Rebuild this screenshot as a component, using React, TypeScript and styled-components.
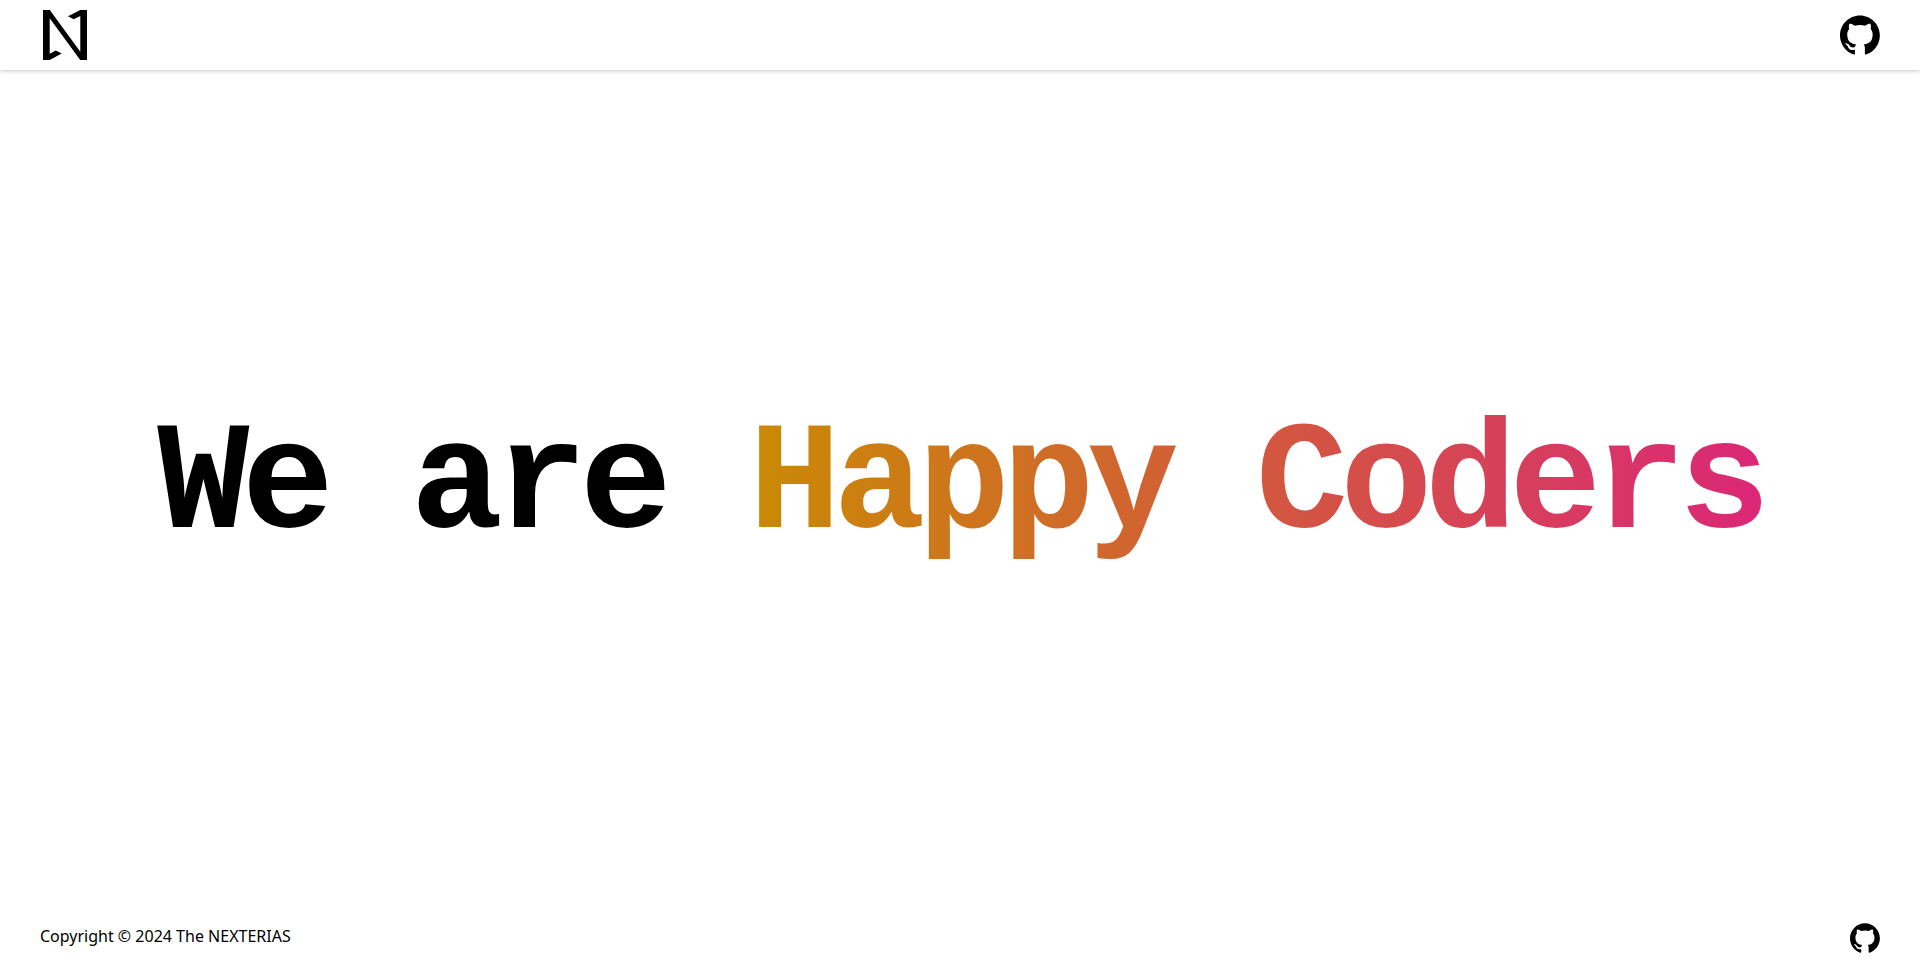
import React from "react";
import styled, { createGlobalStyle } from "styled-components";

const GlobalStyle = createGlobalStyle`
  * { box-sizing: border-box; }
  body { margin: 0; color: #000; background: #fff; font: 16px/24px "Noto Sans", sans-serif; }
`;

const Page = styled.div`
  display: flex;
  flex-direction: column;
  min-height: 100vh;
`;

const Header = styled.header`
  display: flex;
  align-items: center;
  justify-content: space-between;
  height: 70px;
  padding: 0 40px;
  box-shadow: 0 0 5px rgba(0, 0, 0, 0.3);
`;

const IconLink = styled.a<{ $size: number }>`
  display: block;
  color: inherit;
  line-height: 0;
  svg { width: ${(p) => p.$size}px; height: ${(p) => p.$size}px; }
`;

const Main = styled.main`
  display: flex;
  flex: 1;
  align-items: center;
  justify-content: center;
`;

const Title = styled.h1`
  margin: 0;
  font: 700 8vw/1 "Liberation Mono", monospace;
  letter-spacing: -0.05em;
  white-space: nowrap;
`;

const Gradient = styled.span`
  color: transparent;
  background: linear-gradient(to right, #ca8a04, #db2777);
  background-clip: text;
  -webkit-background-clip: text;
`;

const Footer = styled.footer`
  display: flex;
  align-items: flex-start;
  justify-content: space-between;
  padding: 19px 40px;
`;

const Copyright = styled.p`
  margin: 0;
  line-height: 26px;
`;

const GitHubMark = () => (
  <svg viewBox="0 0 98 96" fill="currentColor" aria-hidden="true">
    <path d="M48.854 0C21.839 0 0 22 0 49.217c0 21.756 13.993 40.172 33.405 46.69 2.427.49 3.316-1.059 3.316-2.362 0-1.141-.08-5.052-.08-9.127-13.59 2.934-16.42-5.867-16.42-5.867-2.184-5.704-5.42-7.17-5.42-7.17-4.448-3.015.324-3.015.324-3.015 4.934.326 7.523 5.052 7.523 5.052 4.367 7.496 11.404 5.378 14.235 4.074.404-3.178 1.699-5.378 3.074-6.6-10.839-1.141-22.243-5.378-22.243-24.283 0-5.378 1.94-9.778 5.014-13.2-.485-1.222-2.184-6.275.486-13.038 0 0 4.125-1.304 13.426 5.052a46.97 46.97 0 0 1 12.214-1.63c4.125 0 8.33.571 12.213 1.63 9.302-6.356 13.427-5.052 13.427-5.052 2.67 6.763.97 11.816.485 13.038 3.155 3.422 5.015 7.822 5.015 13.2 0 18.905-11.404 23.06-22.324 24.283 1.78 1.548 3.316 4.481 3.316 9.126 0 6.6-.08 11.897-.08 13.526 0 1.304.89 2.853 3.316 2.364 19.412-6.52 33.405-24.935 33.405-46.691C97.707 22 75.788 0 48.854 0z" />
  </svg>
);

export default function App() {
  return (
    <Page>
      <GlobalStyle />
      <Header>
        <IconLink href="/" $size={50} aria-label="NEXTERIAS home">
          <svg viewBox="0 0 50 50" aria-hidden="true">
            <path d="M3 0H9.8L40.3 41.7V6L33.7 9.3L28 6.3L40.3 0H47V50H40.2L9.7 8.3V43.7L15.8 40.4L21.7 43.6L9.7 50H3Z" />
          </svg>
        </IconLink>
        <IconLink href="https://github.com/" $size={40} aria-label="GitHub">
          <GitHubMark />
        </IconLink>
      </Header>
      <Main>
        <Title>
          We are <Gradient>Happy Coders</Gradient>
        </Title>
      </Main>
      <Footer>
        <Copyright>Copyright © 2024 The NEXTERIAS</Copyright>
        <IconLink href="https://github.com/" $size={30} aria-label="GitHub">
          <GitHubMark />
        </IconLink>
      </Footer>
    </Page>
  );
}
